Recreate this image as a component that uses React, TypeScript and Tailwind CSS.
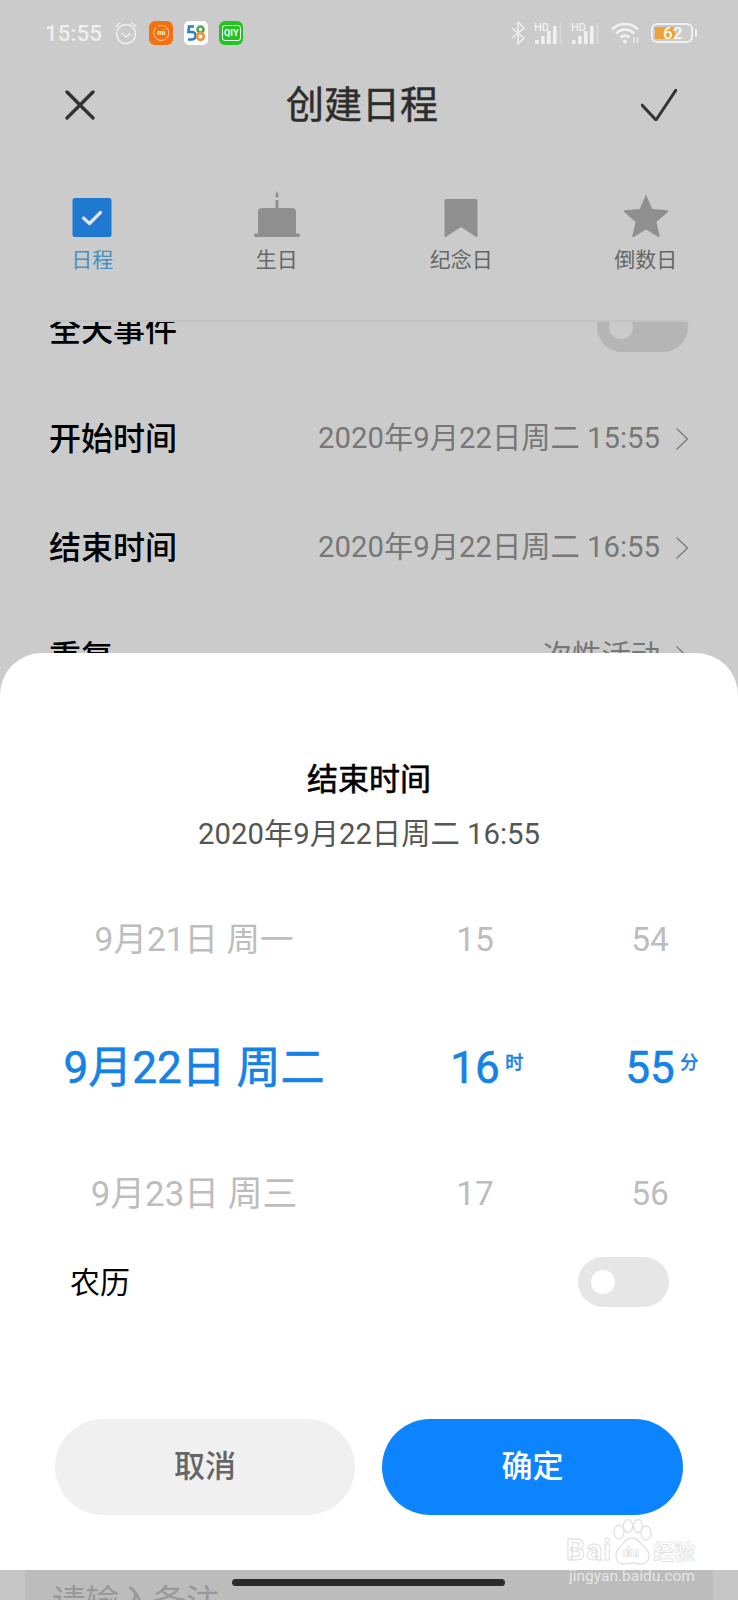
const font = "font-['Roboto','Noto_Sans_CJK_SC',sans-serif]";

const statusApps = (
  <div className="flex items-center gap-[11px] ml-[11px]">
    <div className="relative w-6 h-6 rounded-[6px] bg-[#f5700f] flex items-center justify-center">
      <svg className="absolute left-[3px] top-[3px]" width="18" height="18" viewBox="0 0 18 18" fill="none" stroke="#f9d9bd" strokeWidth="1">
        <path d="M4 3.500A7.500 7.500 0 1 0 6 2.100" />
      </svg>
      <span className="text-[7px] leading-none font-bold text-white">mi</span>
    </div>
    <div className="w-6 h-6 rounded-[5px] bg-white flex items-center justify-center">
      <svg width="22" height="20" viewBox="0 0 22 20" fill="none" strokeWidth="2.600">
        <path d="M9 3.500H4L3.500 9H7a3.400 3.400 0 0 1 0 7.500H3" stroke="#2a7fc4" />
        <circle cx="15.500" cy="6.500" r="3" stroke="#4da84a" />
        <circle cx="15.500" cy="13.500" r="3.400" stroke="#f0913a" />
      </svg>
    </div>
    <div className="w-6 h-6 rounded-[6px] bg-[#1ec61e] flex items-center justify-center">
      <div className="w-[19px] h-[16px] rounded-[3px] border border-white flex items-center justify-center text-[9px] leading-none font-bold text-white tracking-[0.2px]">
        QIY
      </div>
    </div>
  </div>
);

function Signal() {
  return (
    <div className="w-[28px] h-[23px]">
      <svg width="28" height="23" viewBox="0 0 28 23" fill="#f0f0f0">
        <text x="0" y="8.500" fontSize="11" fontWeight="500" fontFamily="Roboto, sans-serif">HD</text>
        <rect x="1" y="18" width="3.600" height="4" />
        <rect x="7" y="14" width="3.600" height="8" />
        <rect x="13" y="9" width="3.600" height="13" />
        <rect x="19" y="4" width="3.600" height="18" />
        <rect x="25.500" y="1" width="2" height="21" fill="#d8d8d8" />
      </svg>
    </div>
  );
}

function StatusBar() {
  return (
    <div className="h-[66px] flex items-center pl-[45px] pr-[45px]">
      <span className="text-[22px] font-medium text-[#efefef] tracking-[0.3px]">15:55</span>
      <svg className="ml-[12px]" width="24" height="24" viewBox="0 0 24 24" fill="none" stroke="#efefef" strokeWidth="1.500" strokeLinecap="round">
        <circle cx="12" cy="13" r="9.500" />
        <path d="M8 12.500l4 3.500 4-3.500M2 5.500 6 2M22 5.500 18 2" />
      </svg>
      {statusApps}
      <div className="ml-auto flex items-center">
        <svg width="14" height="24" viewBox="0 0 14 24" fill="none" stroke="#efefef" strokeWidth="1.600" strokeLinejoin="round">
          <path d="M1 7l12 10-6 6V1l6 6L1 17" />
        </svg>
        <div className="ml-[9px] flex gap-[9px]">
          <Signal />
          <Signal />
        </div>
        <svg className="ml-[12px]" width="29" height="22" viewBox="0 0 29 22" fill="none" stroke="#f0f0f0" strokeWidth="2.600">
          <path d="M1 7.500a18 18 0 0 1 26 0M5 11.500a12.500 12.500 0 0 1 18 0M9.500 15.500a6.400 6.400 0 0 1 9 0" />
          <circle cx="14" cy="19.500" r="2" fill="#f0f0f0" stroke="none" />
          <path d="M23 15v6M26.500 15v6" strokeWidth="1.300" />
        </svg>
        <div className="ml-[11px] relative w-[42px] h-[20px] rounded-[6px] border-2 border-[#f0f0f0] flex items-center p-[2px]">
          <div className="w-[20px] h-full bg-[#eea234]" />
          <span className="absolute left-[10px] top-[-1px] text-[17px] leading-[18px] font-medium text-[#f8f8f8]">62</span>
          <div className="absolute right-[-6px] top-[4px] w-[2px] h-[8px] bg-[#f0f0f0] rounded-full" />
        </div>
      </div>
    </div>
  );
}

function Header() {
  return (
    <div className="h-[78px] flex items-center justify-between pl-[65px] pr-[61px]">
      <svg width="30" height="30" viewBox="0 0 30 30" fill="none" stroke="#333" strokeWidth="3.400" strokeLinecap="round">
        <path d="M2 2l26 26M28 2 2 28" />
      </svg>
      <h1 className="mr-[12px] text-[38px] leading-none font-normal text-[#2d2d2d] [-webkit-text-stroke:0.5px_#2d2d2d]">创建日程</h1>
      <svg width="36" height="32" viewBox="0 0 36 32" fill="none" stroke="#333" strokeWidth="3" strokeLinecap="round" strokeLinejoin="round">
        <path d="M1 16l14 15L35 1" />
      </svg>
    </div>
  );
}

const tabs = [
  {
    label: "日程",
    active: true,
    icon: (
      <svg width="40" height="46" viewBox="0 0 40 46" fill="none">
        <rect x="0.500" y="7" width="39" height="39" rx="2.500" fill="#2079d0" />
        <path d="M11.500 27l6 5.500 11-11" stroke="#dbe6f0" strokeWidth="3.200" strokeLinecap="round" strokeLinejoin="round" />
      </svg>
    ),
  },
  {
    label: "生日",
    icon: (
      <svg width="46" height="46" viewBox="0 0 46 46" fill="#8f8f8f">
        <path d="M21.500 9h3v8h-3zM23 0c.8 2 1.500 3 1.500 5a1.500 1.500 0 0 1-3 0c0-1.500.8-3 1.500-5z" />
        <path d="M4 21a4 4 0 0 1 4-4h30a4 4 0 0 1 4 4v22H4z" />
        <rect x="0" y="42.500" width="46" height="3.500" rx="1.500" />
      </svg>
    ),
  },
  {
    label: "纪念日",
    icon: (
      <svg width="34" height="46" viewBox="0 0 34 46" fill="#8f8f8f">
        <path d="M0.500 10a2 2 0 0 1 2-2h29a2 2 0 0 1 2 2v35a1 1 0 0 1-1.500.800L17 36 2 45.800a1 1 0 0 1-1.500-.800z" />
      </svg>
    ),
  },
  {
    label: "倒数日",
    icon: (
      <svg width="44" height="46" viewBox="0 0 44 46" fill="#8f8f8f">
        <path d="M22 3.500l6.300 14.500 14.700 1.300c1 .1 1.300 1.300.6 1.900L32.400 31l3.300 14c.2 1-.8 1.500-1.500 1L22 38.400 9.800 46c-.8.500-1.700 0-1.500-1l3.300-14L.4 21.200c-.7-.6-.4-1.800.6-1.900l14.700-1.300z" />
      </svg>
    ),
  },
];

function Tabs() {
  return (
    <div className="grid grid-cols-4 h-[176px] items-start pt-[47px]">
      {tabs.map((t) => (
        <div key={t.label} className="flex flex-col items-center">
          <div className="h-[46px] flex items-end">{t.icon}</div>
          <span className={`mt-[8px] text-[21px] leading-[30px] ${t.active ? "text-[#4790c2]" : "text-[#666]"}`}>{t.label}</span>
        </div>
      ))}
    </div>
  );
}

function Chevron({ color = "#808080" }: { color?: string }) {
  return (
    <svg width="14" height="24" viewBox="0 0 14 24" fill="none" stroke={color} strokeWidth="1.600" strokeLinecap="round" strokeLinejoin="round">
      <path d="M2 2l10.500 10L2 22" />
    </svg>
  );
}

const rows = [
  { label: "开始时间", value: "2020年9月22日周二 15:55" },
  { label: "结束时间", value: "2020年9月22日周二 16:55" },
  { label: "重复", value: "一次性活动" },
];

function BackgroundList() {
  return (
    <div className="mx-[49px] border-t-2 border-[#c2c2c2] h-[400px] overflow-hidden">
      <div className="-mt-[47px]">
        <div className="h-[109px] flex items-center justify-between">
          <span className="text-[32px] font-medium text-black">全天事件</span>
          <div className="w-[91px] h-[50px] mr-[1px] -mt-[6px] rounded-[25px] bg-[#b5b5b5] flex items-center pl-[12px]">
            <div className="w-[24px] h-[24px] rounded-full bg-[#cbcbcb]" />
          </div>
        </div>
        {rows.map((r) => (
          <div key={r.label} className="h-[109px] flex items-center justify-between">
            <span className="text-[32px] font-medium text-black">{r.label}</span>
            <div className="flex items-center gap-[15px] text-[29.300px] text-[#777]">
              <span>{r.value}</span>
              <Chevron />
            </div>
          </div>
        ))}
      </div>
    </div>
  );
}

const picker = [
  { date: "9月21日 周一", hour: "15", min: "54", size: "text-[33.500px]" },
  { date: "9月22日 周二", hour: "16", min: "55", selected: true },
  { date: "9月23日 周三", hour: "17", min: "56", size: "text-[34.800px]" },
];

function Picker() {
  return (
    <div className="grid grid-cols-[388px_174px_176px]">
      {picker.map((p) =>
        p.selected ? (
          <div key={p.date} className="contents text-[44px] font-normal text-[#1482e6] [-webkit-text-stroke:0.6px_#1482e6]">
            <div className="h-[127px] flex items-center justify-center">{p.date}</div>
            <div className="h-[127px] flex items-center justify-center">
              <span className="relative">
                {p.hour}
                <span className="absolute left-[55px] top-[16px] text-[18px] leading-[24px] whitespace-nowrap">时</span>
              </span>
            </div>
            <div className="h-[127px] flex items-center justify-center">
              <span className="relative">
                {p.min}
                <span className="absolute left-[55px] top-[16px] text-[18px] leading-[24px] whitespace-nowrap">分</span>
              </span>
            </div>
          </div>
        ) : (
          <div key={p.date} className="contents text-[33.500px] text-[#bdbdbd]">
            <div className={`h-[127px] flex items-center justify-center ${p.size}`}>{p.date}</div>
            <div className="h-[127px] flex items-center justify-center">{p.hour}</div>
            <div className="h-[127px] flex items-center justify-center">{p.min}</div>
          </div>
        )
      )}
    </div>
  );
}

function Sheet() {
  return (
    <div className="absolute left-0 right-0 top-[653px] h-[917px] bg-white rounded-t-[42px] flex flex-col">
      <div className="mt-[107px] text-center text-[31px] leading-[40px] font-normal text-black [-webkit-text-stroke:0.6px_#000]">结束时间</div>
      <div className="mt-[14px] text-center text-[29.300px] leading-[40px] text-[#555]">2020年9月22日周二 16:55</div>
      <div className="mt-[23px]">
        <Picker />
      </div>
      <div className="-mt-[1px] h-[50px] flex items-center justify-between pl-[70px] pr-[69px]">
        <span className="text-[30px] text-black">农历</span>
        <div className="w-[91px] h-[50px] rounded-[25px] bg-[#e6e6e6] flex items-center pl-[13px]">
          <div className="w-[24px] h-[24px] rounded-full bg-white" />
        </div>
      </div>
      <div className="mt-[112px] flex justify-between pl-[55px] pr-[55px]">
        <button className="w-[300px] h-[96px] rounded-[48px] bg-[#f0f0f0] text-[31px] font-medium text-[#666]">取消</button>
        <button className="w-[301px] h-[96px] rounded-[48px] bg-[#0d84ff] text-[31px] font-medium text-white">确定</button>
      </div>
    </div>
  );
}

function Watermark() {
  return (
    <div className="absolute left-[566px] top-[1519px] w-[132px] flex flex-col items-center text-[#e6e6e6] pointer-events-none">
      <div className="relative h-[49px] w-full">
        <svg className="absolute left-[44px] top-0" width="44" height="48" viewBox="0 0 44 48" fill="none" stroke="#e2e2e2" strokeWidth="1.300">
          <ellipse cx="9" cy="13" rx="5" ry="7" />
          <ellipse cx="18" cy="7" rx="4.500" ry="6.500" />
          <ellipse cx="28" cy="7" rx="4.500" ry="6.500" />
          <ellipse cx="36" cy="14" rx="5" ry="7" />
          <path d="M22 19c-6 0-8 5-13 10-5 5-4 16 5 16 4 0 6-1 9-1s5 1 8 1c9 0 10-10 5-15-5-5-8-11-14-11z" />
        </svg>
        <span className="absolute left-0 top-[14px] text-[30px] leading-[34px] font-bold tracking-[1px] text-transparent [-webkit-text-stroke:1px_#e0e0e0]">Bai</span>
        <span className="absolute left-[56px] top-[25px] text-[15px] leading-[16px] font-bold text-transparent [-webkit-text-stroke:0.7px_#e0e0e0]">du</span>
        <span className="absolute left-[87px] top-[21px] text-[21px] leading-[24px] whitespace-nowrap font-bold text-transparent [-webkit-text-stroke:0.7px_#e0e0e0]">经验</span>
      </div>
      <span className="text-[15.500px] leading-[16px] whitespace-nowrap">jingyan.baidu.com</span>
    </div>
  );
}

export default function App() {
  return (
    <div className={`relative w-[738px] h-[1600px] overflow-hidden bg-[#cbcbcb] ${font}`}>
      <StatusBar />
      <Header />
      <Tabs />
      <BackgroundList />
      <Sheet />
      {/* strip under the sheet, still dimmed */}
      <div className="absolute left-0 right-0 top-[1570px] h-[30px] bg-[#c6c6c6]">
        <div className="mx-[25px] h-full bg-[#bcbcbc] overflow-hidden pl-[27px] text-[33.500px] leading-[64px] text-[#989898]">
          请输入备注
        </div>
      </div>
      <div className="absolute left-[232px] top-[1579px] w-[273px] h-[7px] rounded-full bg-[#2b2b2b]" />
      <Watermark />
    </div>
  );
}
